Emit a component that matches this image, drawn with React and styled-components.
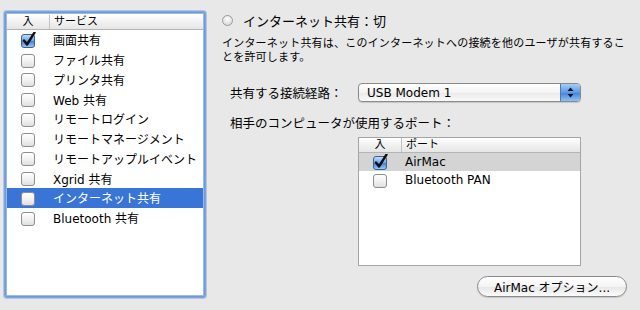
import React from 'react';
import styled, { createGlobalStyle } from 'styled-components';

const GlobalStyle = createGlobalStyle`
  html, body {
    margin: 0;
    padding: 0;
    background: #e8e8e8;
  }
  body {
    font-family: "DejaVu Sans", "Noto Sans CJK JP", sans-serif;
    color: #000;
  }
`;

const Window = styled.div`
  display: flex;
  width: 640px;
  height: 310px;
  background: #e8e8e8;
  overflow: hidden;
`;

const ServiceList = styled.div`
  margin: 12px 0 0 5px;
  width: 200px;
  height: 285px;
  box-sizing: border-box;
  border: 1px solid #6f9ad6;
  box-shadow: 0 0 0 1px #7fa6dc, 0 0 0 2px rgba(140, 175, 225, 0.6), inset 0 0 0 1px #9bbbe6;
  border-radius: 2px;
  background: #fff;
  padding: 2px 1px;
  display: flex;
  flex-direction: column;
`;

const HeaderRow = styled.div`
  display: grid;
  grid-template-columns: 42px 1fr;
  height: 15px;
  box-sizing: border-box;
  border-bottom: 1px solid #b4b4b4;
  background: linear-gradient(#ffffff, #f1f1f1 50%, #e6e6e6);
  font-size: 11px;
  line-height: 14px;
`;

const HeaderCell = styled.div`
  text-align: ${p => (p.$center ? 'center' : 'left')};
  padding-left: ${p => (p.$center ? 0 : 4)}px;
  border-left: ${p => (p.$center ? 'none' : '1px solid #c2c2c2')};
  white-space: nowrap;
`;

const Row = styled.div`
  display: grid;
  grid-template-columns: 42px 1fr;
  align-items: center;
  height: ${p => p.$h}px;
  background: ${p => p.$bg || 'transparent'};
  color: ${p => (p.$light ? '#fff' : '#000')};
  font-size: 12px;
`;

const BoxCell = styled.div`
  display: flex;
  justify-content: center;
  align-items: center;
`;

const Label = styled.div`
  padding-left: 4px;
  white-space: nowrap;
`;

const Right = styled.div`
  flex: 1;
  display: flex;
  flex-direction: column;
  padding: 13px 0 0 17px;
`;

const TitleRow = styled.div`
  display: flex;
  align-items: center;
  height: 14px;
  font-size: 13px;
`;

const Radio = styled.span`
  width: 9px;
  height: 9px;
  border-radius: 50%;
  border: 1px solid #9a9a9a;
  background: radial-gradient(circle at 50% 35%, #ffffff, #cfcfcf);
  margin-right: 10px;
`;

const Desc = styled.div`
  margin-top: 10px;
  width: 406px;
  font-size: 11px;
  letter-spacing: 0.2px;
  line-height: 13.5px;
`;

const ConnRow = styled.div`
  display: flex;
  align-items: center;
  margin: 19px 0 0 8px;
  height: 19px;
`;

const FieldLabel = styled.div`
  font-size: 12.5px;
  width: ${p => (p.$w ? `${p.$w}px` : 'auto')};
  white-space: nowrap;
`;

const Popup = styled.div`
  width: 223px;
  height: 19px;
  box-sizing: border-box;
  border: 1px solid #8a8a8a;
  border-radius: 4px;
  background: linear-gradient(#ffffff, #f3f3f3 50%, #e9e9e9 51%, #fafafa);
  display: flex;
  align-items: center;
  overflow: hidden;
  font-size: 12px;
  box-shadow: 0 1px 1px rgba(0, 0, 0, 0.15);
`;

const PopupText = styled.div`
  flex: 1;
  padding-left: 8px;
`;

const PopupArrows = styled.div`
  width: 19px;
  height: 100%;
  background: linear-gradient(#a6cdf6, #5a9ae6 50%, #3f83dd 51%, #8cc2f5);
  border-left: 1px solid #5379a8;
  display: flex;
  align-items: center;
  justify-content: center;
`;

const PortsLabel = styled(FieldLabel)`
  margin: 14px 0 0 8px;
  line-height: 16px;
`;

const PortTable = styled.div`
  margin: 5px 0 0 136px;
  width: 223px;
  height: 129px;
  box-sizing: border-box;
  border: 1px solid #a5a5a5;
  background: #fff;
  display: flex;
  flex-direction: column;
`;

const OptionButton = styled.button`
  align-self: flex-end;
  margin: 10px 13px 0 0;
  width: 150px;
  height: 21px;
  border: 1px solid #8a8a8a;
  border-radius: 11px;
  background: linear-gradient(#ffffff, #f4f4f4 50%, #e6e6e6 51%, #fbfbfb);
  font-family: "DejaVu Sans", "Noto Sans CJK JP", sans-serif;
  font-size: 12px;
  color: #000;
  padding: 0;
  box-shadow: 0 1px 1px rgba(0, 0, 0, 0.15);
`;

const CheckBox = ({ checked }) => (
  <svg width="15" height="16" viewBox="0 0 15 16">
    <defs>
      <linearGradient id="cbOff" x1="0" y1="0" x2="0" y2="1">
        <stop offset="0" stopColor="#ffffff" />
        <stop offset="0.5" stopColor="#f2f2f2" />
        <stop offset="1" stopColor="#dedede" />
      </linearGradient>
      <linearGradient id="cbOn" x1="0" y1="0" x2="0" y2="1">
        <stop offset="0" stopColor="#c6e0fb" />
        <stop offset="0.5" stopColor="#6aa6ec" />
        <stop offset="0.51" stopColor="#3b80dc" />
        <stop offset="1" stopColor="#9fd0fb" />
      </linearGradient>
    </defs>
    <rect x="0.5" y="2.5" width="13" height="13" rx="2.5"
      fill={checked ? 'url(#cbOn)' : 'url(#cbOff)'}
      stroke={checked ? '#3f5f8c' : '#8e8e8e'} />
    {checked && (
      <path d="M3 8.5 L6 12.5 L13.5 0.5" fill="none" stroke="#111" strokeWidth="2.4"
        strokeLinecap="round" strokeLinejoin="round" />
    )}
  </svg>
);

const services = [
  { name: '画面共有', on: true },
  { name: 'ファイル共有' },
  { name: 'プリンタ共有' },
  { name: 'Web 共有' },
  { name: 'リモートログイン' },
  { name: 'リモートマネージメント' },
  { name: 'リモートアップルイベント' },
  { name: 'Xgrid 共有' },
  { name: 'インターネット共有', selected: true },
  { name: 'Bluetooth 共有' },
];

const ports = [
  { name: 'AirMac', on: true, selected: true },
  { name: 'Bluetooth PAN' },
];

export default function App() {
  return (
    <Window>
      <GlobalStyle />
      <ServiceList>
        <HeaderRow>
          <HeaderCell $center>入</HeaderCell>
          <HeaderCell>サービス</HeaderCell>
        </HeaderRow>
        {services.map(s => (
          <Row key={s.name} $h={19.75} $bg={s.selected ? '#3875d7' : null} $light={s.selected}>
            <BoxCell><CheckBox checked={s.on} /></BoxCell>
            <Label>{s.name}</Label>
          </Row>
        ))}
      </ServiceList>
      <Right>
        <TitleRow>
          <Radio />
          インターネット共有：切
        </TitleRow>
        <Desc>
          インターネット共有は、このインターネットへの接続を他のユーザが共有することを許可します。
        </Desc>
        <ConnRow>
          <FieldLabel $w={128}>共有する接続経路：</FieldLabel>
          <Popup>
            <PopupText>USB Modem 1</PopupText>
            <PopupArrows>
              <svg width="7" height="11" viewBox="0 0 7 11">
                <path d="M3.5 0.5 L6.5 4 L0.5 4 Z" fill="#111" />
                <path d="M3.5 10.5 L6.5 7 L0.5 7 Z" fill="#111" />
              </svg>
            </PopupArrows>
          </Popup>
        </ConnRow>
        <PortsLabel>相手のコンピュータが使用するポート：</PortsLabel>
        <PortTable>
          <HeaderRow>
            <HeaderCell $center>入</HeaderCell>
            <HeaderCell>ポート</HeaderCell>
          </HeaderRow>
          {ports.map(p => (
            <Row key={p.name} $h={18} $bg={p.selected ? '#d4d4d4' : null}>
              <BoxCell><CheckBox checked={p.on} /></BoxCell>
              <Label>{p.name}</Label>
            </Row>
          ))}
        </PortTable>
        <OptionButton>AirMac オプション...</OptionButton>
      </Right>
    </Window>
  );
}
